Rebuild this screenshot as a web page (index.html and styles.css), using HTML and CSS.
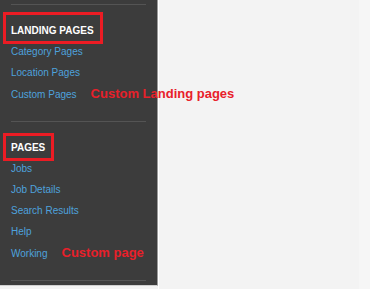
FILE: index.html
```html
<!DOCTYPE html>
<html>
<head>
    <meta charset="UTF-8">
    <title>Pages</title>
    <link rel="stylesheet" href="styles.css">
</head>
<body>

<div id="sidebar">
    <div class="divider"></div>
    <h3 class="heading first">LANDING PAGES</h3>
    <ul class="links">
        <li><a href="javascript:;">Category Pages</a></li>
        <li><a href="javascript:;">Location Pages</a></li>
        <li><a href="javascript:;">Custom Pages</a><span class="note">Custom Landing pages</span></li>
    </ul>
    <div class="divider"></div>
    <h3 class="heading second">PAGES</h3>
    <ul class="links">
        <li><a href="javascript:;">Jobs</a></li>
        <li><a href="javascript:;">Job Details</a></li>
        <li><a href="javascript:;">Search Results</a></li>
        <li><a href="javascript:;">Help</a></li>
        <li><a href="javascript:;">Working</a><span class="note">Custom page</span></li>
    </ul>
    <div class="divider"></div>
</div>
<div id="main">
    <div class="strip"></div>
</div>

</body>
</html>
```

FILE: styles.css
```css
*{ margin: 0; padding: 0; text-decoration: none; list-style: none;}
html, body { height: 100%;}
body { display: flex; background: #f3f3f3; font-family: "Liberation Sans", Arial, sans-serif; font-size: 10px; overflow: hidden;}
#sidebar { width: 158px; height: 286px; padding-top: 4px; box-sizing: border-box; background: #3c3c3c; border-right: 1px solid #9a9a9a; border-bottom: 1px solid #d0d0d0; position: relative; z-index: 1;}
.divider { height: 1px; margin: 0 11px; background: #545454;}
.heading { width: 94px; margin-left: 6px; padding-left: 5px; box-sizing: border-box; line-height: 21px; font-size: 10px; font-weight: bold; color: #fff; outline: 3px solid #ec1c24;}
.heading.first { margin-top: 10px; padding-top: 5px;}
.heading.second { width: 45px; margin-top: 14px; padding-top: 1px;}
.links { padding-left: 11px; margin-bottom: 16px;}
.links li { line-height: 21px; white-space: nowrap;}
.links a { color: #4ea2dc;}
.note { margin-left: 14px; font-size: 13px; font-weight: bold; color: #e8202a;}
#main { flex: 1; display: flex; justify-content: flex-end; background: #f3f3f3; border-left: 1px solid #fff;}
.strip { width: 11px; background: #f6f6f6;}
```
